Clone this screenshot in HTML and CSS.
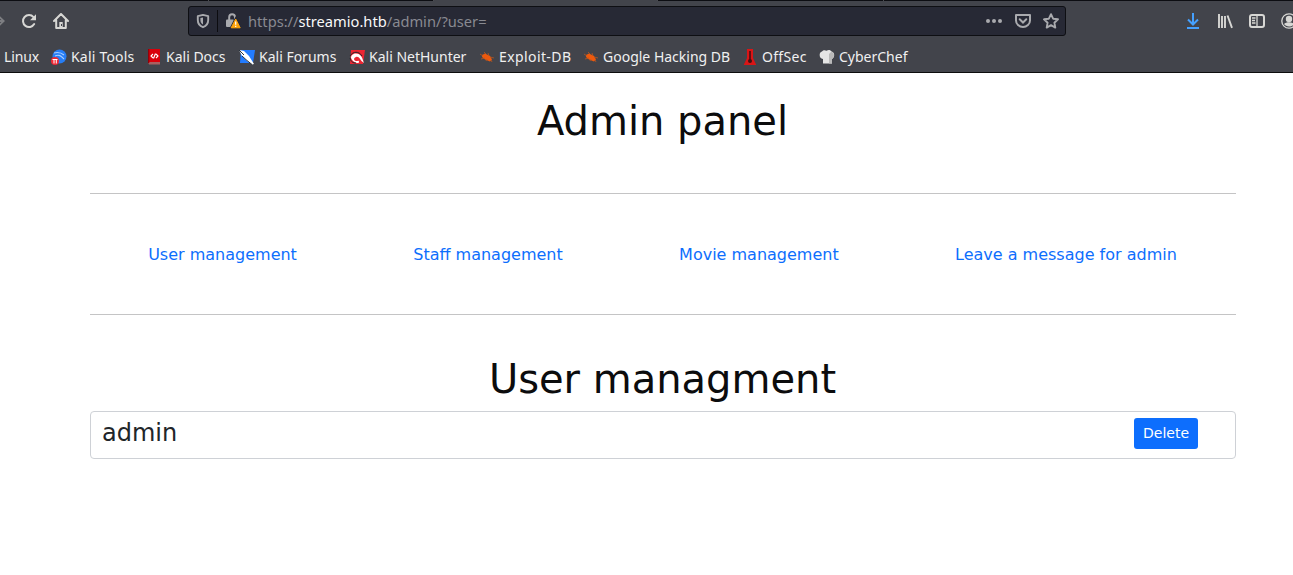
FILE: index.html
```html
<!DOCTYPE html>
<html lang="en">
<head>
<meta charset="utf-8">
<title>Admin panel</title>
<link rel="stylesheet" href="styles.css">
</head>
<body>
<header class="browser">
  <div class="tabs"><span class="tab tab-first"></span><span class="tab tab-second"></span><span class="tab tab-active"></span><span class="tab tab-next"></span><span class="tab tab-rest"></span></div>
  <div class="toolbar">
    <div class="controls">
      <svg class="forward" width="5" height="16" viewBox="0 0 5 16"><path d="M-1 3.500l4.800 4.500L-1 12.500M-1 8h4" fill="none" stroke="#7d7e82" stroke-width="1.800"/></svg>
      <svg class="reload" width="16" height="16" viewBox="0 0 16 16"><path d="M13.2 11.1A6 6 0 1 1 12.5 4.1" fill="none" stroke="#d7d7d4" stroke-width="2" stroke-linecap="round"/><path d="M15 1.2v6H9z" fill="#d7d7d4"/></svg>
      <svg class="home" width="16" height="16" viewBox="0 0 16 16"><path d="M1 8l7-7 7 7M3.2 7v8h9.6V7" fill="none" stroke="#d7d7d4" stroke-width="2" stroke-linecap="round" stroke-linejoin="round"/><path d="M6.3 9h3.4v6H6.3z" fill="#d7d7d4"/><path d="M8 11h1v2H8z" fill="#42444b"/></svg>
    </div>
    <div class="urlbar">
      <svg class="shield" width="14" height="16" viewBox="0 0 14 16"><path d="M7 1.9l5.200 1.300v3.800c0 3.600-2 6-5.200 7.200-3.200-1.200-5.200-3.600-5.200-7.200V3.2z" fill="none" stroke="#a9aaae" stroke-width="1.9" stroke-linejoin="round"/><path d="M7 4.4v7.200C5.3 10.700 4.400 9 4.400 7V5z" fill="#a9aaae"/></svg>
      <span class="divider"></span>
      <svg class="lock" width="16" height="16" viewBox="0 0 16 16"><path d="M4.200 7V4.200a2.900 2.900 0 0 1 5.800 0V6" fill="none" stroke="#a9aaae" stroke-width="2"/><rect x="1" y="6.500" width="8" height="7.500" rx="1" fill="#a9aaae"/><path d="M10.700 6l4.500 8.800H6.200z" fill="#ffa40b" stroke="#272935" stroke-width="2.500"/><path d="M10.700 6l4.500 8.800H6.200z" fill="#ffa40b" stroke="#ffa40b" stroke-linejoin="round"/><path d="M10.100 8.500h1.200v3.300h-1.200zM10.100 12.800h1.200V14h-1.200z" fill="#fff"/></svg>
      <span class="url">https://<b>streamio.htb</b>/admin/?user=</span>
      <span class="actions">
        <svg width="18" height="16" viewBox="0 0 18 16"><g fill="#a9aaae"><circle cx="3" cy="8" r="2"/><circle cx="9" cy="8" r="2"/><circle cx="15" cy="8" r="2"/></g></svg>
        <svg width="16" height="16" viewBox="0 0 16 16"><path d="M1 2h14v5.500a7 6.500 0 0 1-14 0z" fill="none" stroke="#a9aaae" stroke-width="2" stroke-linejoin="round"/><path d="M4.700 6.300L8 9.500l3.300-3.200" fill="none" stroke="#a9aaae" stroke-width="2" stroke-linecap="round"/></svg>
        <svg width="16" height="16" viewBox="0 0 16 16"><path d="M8 1.200l2.100 4.500 4.900.6-3.600 3.400.9 4.900L8 12.200l-4.300 2.400.9-4.900L1 6.300l4.900-.6z" fill="none" stroke="#a9aaae" stroke-width="1.900" stroke-linejoin="round"/></svg>
      </span>
    </div>
    <div class="tools">
      <svg width="16" height="16" viewBox="0 0 16 16"><path d="M8 0v11M3 6.500l5 5 5-5M2 15h12" fill="none" stroke="#45a1ff" stroke-width="2"/></svg>
      <svg width="16" height="16" viewBox="0 0 16 16"><path d="M2 1v14M5 3v12M8 3v12M10.500 2.500L15 14.800" fill="none" stroke="#d7d7d4" stroke-width="1.900"/></svg>
      <svg width="16" height="16" viewBox="0 0 16 16"><rect x="1" y="2" width="14" height="12" rx="2" fill="none" stroke="#d7d7d4" stroke-width="2"/><path d="M8 2v12M3 5h3.500M3 7.500h3M3 10h3.500" stroke="#d7d7d4" stroke-width="1.300"/></svg>
      <svg width="16" height="16" viewBox="0 0 16 16"><circle cx="8" cy="8" r="7.200" fill="none" stroke="#d7d7d4" stroke-width="1.300"/><circle cx="8" cy="6" r="3.200" fill="#d7d7d4"/><path d="M3 11c2-2.500 8-2.500 10 0-2 3.300-8 3.300-10 0z" fill="#d7d7d4"/></svg>
    </div>
  </div>
  <nav class="bookmarks">
    <span class="bookmark b-linux">Linux</span>
    <span class="bookmark b-tools"><svg width="16" height="16" viewBox="0 0 16 16"><circle cx="8.500" cy="7.500" r="7" fill="#267df5"/><path d="M3 4c4-1 7-.5 10 2M4 7c4-2 6 0 9 3" fill="none" stroke="#a9ceff" stroke-width="1.100"/><circle cx="4" cy="12" r="4" fill="#ed2835"/><path d="M1.500 10.500h5M3 10.500v4M5.300 10.500v4" stroke="#fff" stroke-width="1"/></svg>Kali Tools</span>
    <span class="bookmark b-docs"><svg width="16" height="16" viewBox="0 0 16 16"><path d="M2 0h12v13H2z" fill="#d9000a"/><path d="M2 13h12v2.500H3z" fill="#a96060"/><path d="M2 0h1.300v14H2z" fill="#960009"/><path d="M7 5L5 7l2 2M10 5l2 2-2 2M9.500 4.500L7.500 9.500" fill="none" stroke="#fff" stroke-width="1.100"/></svg>Kali Docs</span>
    <span class="bookmark b-forums"><svg width="16" height="16" viewBox="0 0 16 16"><path d="M2 1h14l-2 13H1z" fill="#237cff"/><path d="M0 1l5 1 5 5 5 8-2 .500-5-3.500-5-5z" fill="#fff"/><path d="M0 1l5 5M3 7l5 4.500 5 4" fill="none" stroke="#26313c" stroke-width="1"/></svg>Kali Forums</span>
    <span class="bookmark b-hunter"><svg width="16" height="16" viewBox="0 0 16 16"><path d="M2 1h14l-2 14H1z" fill="#ed2633"/><path d="M2 9c0-5 7-6 10-2 2 3 2 5 3 7-4-2-4-7-8-6-3 1-2 4 0 4 2 0 3-1 3 1s-6 1-8-4z" fill="#fff"/><path d="M1 7c3-5 9-5 12 0M1 9c1 4 3 5 6 5" fill="none" stroke="#25272b" stroke-width="1"/></svg>Kali NetHunter</span>
    <span class="bookmark b-exploit"><svg width="16" height="16" viewBox="0 0 16 16"><path d="M3 6l3-1.500 5 2.500 2 3.500-2 2-5-2-3-2.500z" fill="#ed590d"/><path d="M1 5l3 2M5 3l2 2M9 4l1 3M11 8l4 1M2 10l4-1M7 12l1-2M12 11l1 2" stroke="#b9571f" stroke-width=".8"/></svg>Exploit-DB</span>
    <span class="bookmark b-google"><svg width="16" height="16" viewBox="0 0 16 16"><path d="M3 6l3-1.500 5 2.500 2 3.500-2 2-5-2-3-2.500z" fill="#ed590d"/><path d="M1 5l3 2M5 3l2 2M9 4l1 3M11 8l4 1M2 10l4-1M7 12l1-2M12 11l1 2" stroke="#b9571f" stroke-width=".8"/></svg>Google Hacking DB</span>
    <span class="bookmark b-offsec"><svg width="16" height="16" viewBox="0 0 16 16"><path d="M5 0h6v9l3.300 7H1.700L5 9z" fill="#d91516"/><path d="M8 2v9" stroke="#420f12" stroke-width="1.600"/><circle cx="8" cy="12" r="2" fill="#420f12"/></svg>OffSec</span>
    <span class="bookmark b-chef"><svg width="16" height="16" viewBox="0 0 16 16"><path d="M4 14.500V10C0 9.500-.5 3.500 3 2.500c1-1.500 3-1.700 4.500-.8 2-1.200 4-.8 5 .8 3.500.5 3.500 6 .5 7.500v4.500z" fill="#e5e5e5"/><path d="M10 5v9.500h3V10c2.500-1 3-6-.5-7.500z" fill="#b9b9b9"/></svg>CyberChef</span>
  </nav>
</header>
<main class="container">
  <h1 class="title">Admin panel</h1>
  <hr class="rule">
  <nav class="sections">
    <a href="#">User management</a>
    <a href="#">Staff management</a>
    <a href="#">Movie management</a>
    <a href="#">Leave a message for admin</a>
  </nav>
  <hr class="rule rule-lower">
  <h1 class="subtitle">User managment</h1>
  <div class="user-row"><span class="user-name">admin</span><button class="delete">Delete</button></div>
</main>
</body>
</html>
```
FILE: styles.css
```css
* { box-sizing: border-box; }
body { margin: 0; background: #fff; color: #212529; font-family: "DejaVu Sans", sans-serif; overflow: hidden; }
svg { display: block; flex: none; }
.browser { height: 73px; background: #42444b; border-bottom: 1px solid #0c0c0d; font-family: "Noto Sans", sans-serif; font-size: 14px; }
.tabs { display: flex; height: 1px; }
.tab { background: #0c0d12; border-right: 1px solid #4a4b50; }
.tab-first { width: 209px; }
.tab-second { width: 225px; }
.tab-active { width: 224px; background: #42444b; }
.tab-next { width: 226px; }
.tab-rest { flex: 1; border: 0; }
.toolbar { display: flex; height: 40px; align-items: center; overflow: hidden; }
.controls { display: flex; flex: none; width: 188px; align-items: center; }
.reload { margin-left: 16px; }
.home { margin-left: 16px; }
.urlbar { display: flex; flex: none; align-items: center; width: 878px; height: 30px; padding: 0 5px 0 7px; background: #272935; border: 1px solid #0e0f13; border-radius: 3px; }
.divider { width: 1px; height: 22px; margin-left: 7px; background: #0c0c10; }
.lock { margin-left: 7px; }
.url { margin-left: 7px; line-height: 22px; color: #898a91; font-size: 14.67px; }
.url b { color: #f9f9fa; font-weight: 400; }
.actions { display: flex; gap: 12px; margin-left: auto; padding-right: 1px; }
.tools { display: flex; flex: none; gap: 16px; padding-left: 119px; }
.bookmarks { display: flex; height: 31px; padding-left: 4px; white-space: nowrap; color: #f0f0f0; }
.bookmark { display: flex; align-items: center; flex: none; gap: 4px; line-height: 20px; }
.b-linux { width: 47px; letter-spacing: -.1px; }
.b-tools { width: 95px; letter-spacing: .2px; }
.b-docs { width: 93px; }
.b-forums { width: 110px; }
.b-hunter { width: 130px; }
.b-exploit { width: 104px; letter-spacing: .4px; }
.b-google { width: 159px; }
.b-offsec { width: 77px; letter-spacing: .3px; }
.container { width: 1146px; margin: 0 0 0 90px; padding-top: 24px; }
.title, .subtitle { margin: 0; padding-right: 1px; color: #0c0c0d; font-size: 40px; font-weight: 400; line-height: 48px; text-align: center; }
.rule { height: 1px; margin: 48px 0 0; border: 0; background: #c4c4c5; }
.sections { display: flex; justify-content: space-around; padding: 49px 1px 0 0; line-height: 24px; font-size: 16px; }
.rule-lower { margin-top: 47px; }
.sections a { color: #0d6efd; text-decoration: none; }
.subtitle { margin-top: 40px; }
.user-row { display: flex; justify-content: space-between; height: 48px; margin-top: 8px; padding: 6px 37px 0 11px; border: 1px solid #ced1d6; border-radius: 4px; }
.user-name { font-size: 24px; line-height: 31px; }
.delete { width: 64px; height: 31px; padding: 0; border: 0; border-radius: 3px; background: #0d6efd; color: #fff; font: 14px/21px "DejaVu Sans", sans-serif; }
```
